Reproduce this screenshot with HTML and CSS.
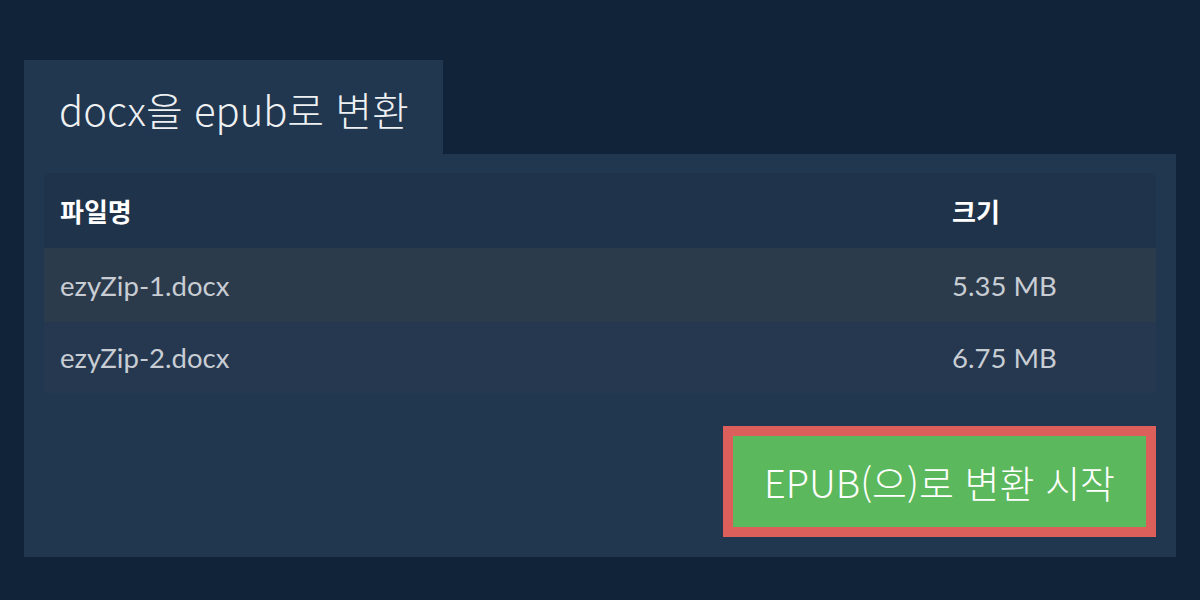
FILE: index.html
```html
<!DOCTYPE html>
<html lang="ko">
<head>
<meta charset="utf-8">
<title>docx을 epub로 변환</title>
<link rel="stylesheet" href="styles.css">
</head>
<body>
<div class="wrap">
  <div class="tab"><h1 class="title">docx을 epub로 변환</h1></div>
  <div class="panel">
    <table class="files">
      <thead>
        <tr class="head"><th class="c-name">파일명</th><th class="c-size">크기</th></tr>
      </thead>
      <tbody>
        <tr class="row odd"><td>ezyZip-1.docx</td><td>5.35 MB</td></tr>
        <tr class="row even"><td>ezyZip-2.docx</td><td>6.75 MB</td></tr>
      </tbody>
    </table>
    <div class="actions">
      <button class="convert">EPUB(으)로 변환 시작</button>
    </div>
  </div>
</div>
</body>
</html>
```
FILE: styles.css
```css
html, body {
  margin: 0;
  padding: 0;
  background: #112339;
}
.wrap {
  padding: 60px 24px 0 24px;
}
.tab {
  width: 419px;
  height: 94px;
  background: #21364f;
  display: flex;
  align-items: center;
  box-sizing: border-box;
  padding-left: 35px;
  padding-top: 4px;
}
.title {
  margin: 0;
  font-family: "Noto Sans CJK KR", "Open Sans", sans-serif;
  font-weight: 300;
  font-size: 40px;
  color: #eef0f2;
  line-height: 1;
}
.panel {
  background: #21364f;
  padding: 19px 20px 20px 20px;
}
.files {
  width: 100%;
  border-collapse: collapse;
  font-family: Lato, "Noto Sans CJK KR", sans-serif;
}
.files th, .files td {
  text-align: left;
  padding: 0 16px;
}
.head {
  background: #1f334a;
  height: 75px;
}
.head th {
  font-family: Lato, "Noto Sans CJK KR", sans-serif;
  font-weight: 700;
  font-size: 26px;
  color: #ffffff;
}
.c-size {
  width: 188px;
}
.row td {
  font-size: 27.5px;
  color: #c8cdd4;
}
.odd {
  background: #2c3b4c;
  height: 74px;
}
.even {
  background: #25384f;
  height: 71px;
}
.actions {
  display: flex;
  justify-content: flex-end;
  margin-top: 33px;
}
.convert {
  width: 433px;
  height: 111px;
  border: 10px solid #dc5f5b;
  background: #5cb85c;
  color: #ffffff;
  font-family: "Noto Sans CJK KR", "Open Sans", sans-serif;
  font-weight: 300;
  font-size: 38px;
  padding: 0;
  margin: 0;
}
```
